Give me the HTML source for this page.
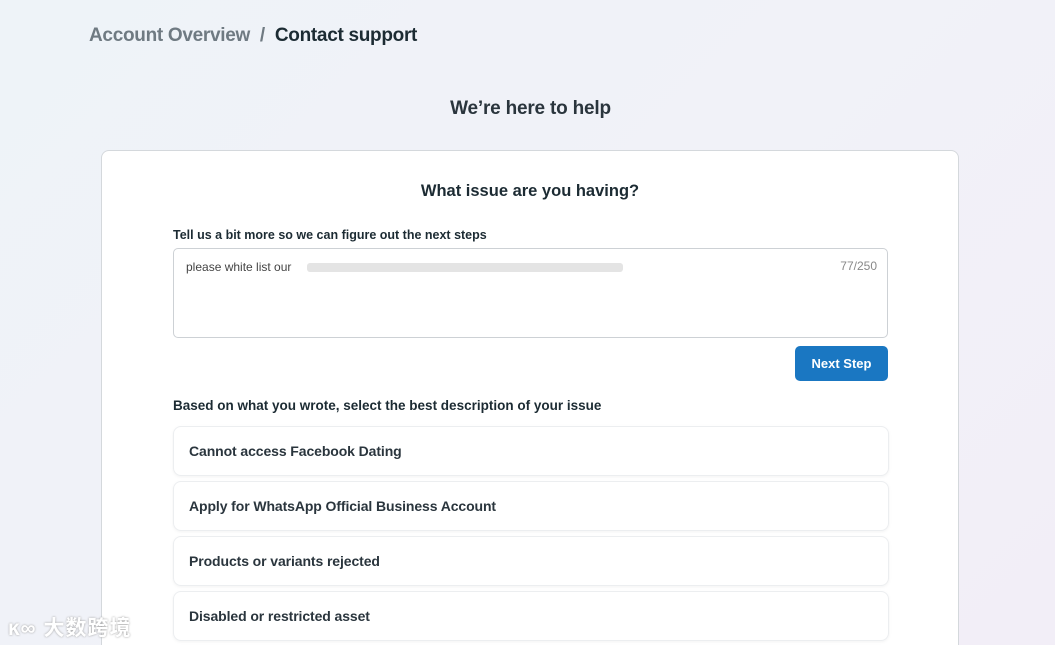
<!DOCTYPE html>
<html><head><meta charset="utf-8"><style>
*{box-sizing:border-box;margin:0;padding:0}
html,body{width:1055px;height:645px;overflow:hidden}
body{font-family:"Liberation Sans","Noto Sans CJK SC",sans-serif;background:linear-gradient(135deg,#eef3f8 0%,#f1f2f8 50%,#f2eef7 100%);position:relative;color:#1c2b33}
.crumb{position:absolute;left:89px;top:25px;font-size:19px;color:#6f7a82;font-weight:bold;letter-spacing:-0.3px}
.crumb b{color:#1c2b33}
.help{position:absolute;top:98px;width:1055px;text-align:center;left:3px;font-size:19px;font-weight:bold;color:#2a353d;letter-spacing:-0.2px}
.card{position:absolute;left:101px;top:150px;width:858px;height:520px;background:#fff;border:1px solid #d4d8dc;border-radius:8px}
.q{position:absolute;top:31px;width:100%;text-align:center;font-size:16.5px;font-weight:bold;color:#1c2b33}
.lbl{position:absolute;left:71px;font-size:12.5px;font-weight:bold;color:#1c2b33}
.ta{position:absolute;left:71px;top:97px;width:715px;height:90px;border:1px solid #cdd1d5;border-radius:5px}
.ta .t{position:absolute;left:12px;top:11px;font-size:12px;color:#444}
.ta .blur{position:absolute;left:133px;top:14px;width:316px;height:9px;background:#e4e4e4;border-radius:3px}
.ta .c{position:absolute;right:10px;top:10px;font-size:12px;color:#888}
.btn{position:absolute;left:693px;top:195px;width:93px;height:35px;background:#1a77c2;border-radius:5px;color:#fff;font-size:13px;font-weight:bold;text-align:center;line-height:35px}
.opt{position:absolute;left:71px;width:716px;height:50px;border:1px solid #eceef0;border-radius:8px;box-shadow:0 1px 3px rgba(0,0,0,.05);font-size:14px;font-weight:bold;color:#2a353d;padding-left:15px;line-height:48px;letter-spacing:-0.1px}
.wm{position:absolute;left:8px;top:612px;font-size:21px;color:#fff;font-weight:bold;text-shadow:0 0 2px #999;letter-spacing:1px}
</style></head><body>
<div class="crumb">Account Overview &nbsp;/&nbsp; <b>Contact support</b></div>
<div class="help">We’re here to help</div>
<div class="card">
<div class="q">What issue are you having?</div>
<div class="lbl" style="top:77px">Tell us a bit more so we can figure out the next steps</div>
<div class="ta"><div class="t">please white list our</div><div class="blur"></div><div class="c">77/250</div></div>
<div class="btn">Next Step</div>
<div class="lbl" style="top:247px;font-size:13.5px">Based on what you wrote, select the best description of your issue</div>
<div class="opt" style="top:275px">Cannot access Facebook Dating</div>
<div class="opt" style="top:330px">Apply for WhatsApp Official Business Account</div>
<div class="opt" style="top:385px">Products or variants rejected</div>
<div class="opt" style="top:440px">Disabled or restricted asset</div>
</div>
<div class="wm">ĸ∞ 大数跨境</div>
</body></html>
